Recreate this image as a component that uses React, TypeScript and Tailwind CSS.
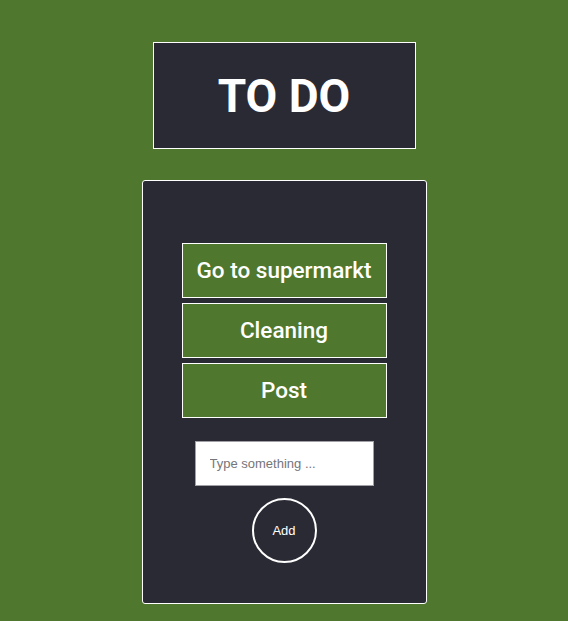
import React, { useState } from 'react';

const ITEMS = ['Go to supermarkt', 'Cleaning', 'Post'];

export default function App() {
  const [items, setItems] = useState(ITEMS);
  const [text, setText] = useState('');

  const add = () => {
    if (!text.trim()) return;
    setItems([...items, text.trim()]);
    setText('');
  };

  return (
    <div className="min-h-[621px] bg-[#4f772d] flex flex-col items-center pt-[42px] font-['Roboto',sans-serif]">
      <header className="w-[263px] h-[107px] bg-[#2a2a35] border border-white flex items-center justify-center">
        <h1 className="text-[46px] font-bold text-white leading-none">TO DO</h1>
      </header>

      <main className="mt-[31px] w-[285px] h-[424px] bg-[#2a2a35] border border-white rounded-[3px] flex flex-col items-center pt-[62px]">
        <ul className="flex flex-col gap-[5px]">
          {items.map((item) => (
            <li
              key={item}
              className="w-[205px] h-[55px] bg-[#4f772d] border border-white flex items-center justify-center text-white text-[22.5px] font-medium"
            >
              {item}
            </li>
          ))}
        </ul>

        <input
          value={text}
          onChange={(e) => setText(e.target.value)}
          placeholder="Type something ..."
          className="mt-[23px] w-[179px] h-[45px] bg-white border border-[#a0a0a6] px-[14px] text-[13px] font-['Liberation_Sans',sans-serif] text-gray-800 placeholder:text-[#75757a] outline-none"
        />

        <button
          onClick={add}
          className="mt-[12px] w-[65px] h-[65px] rounded-full border-2 border-white text-white text-[13px] font-['Liberation_Sans',sans-serif]"
        >
          Add
        </button>
      </main>
    </div>
  );
}
